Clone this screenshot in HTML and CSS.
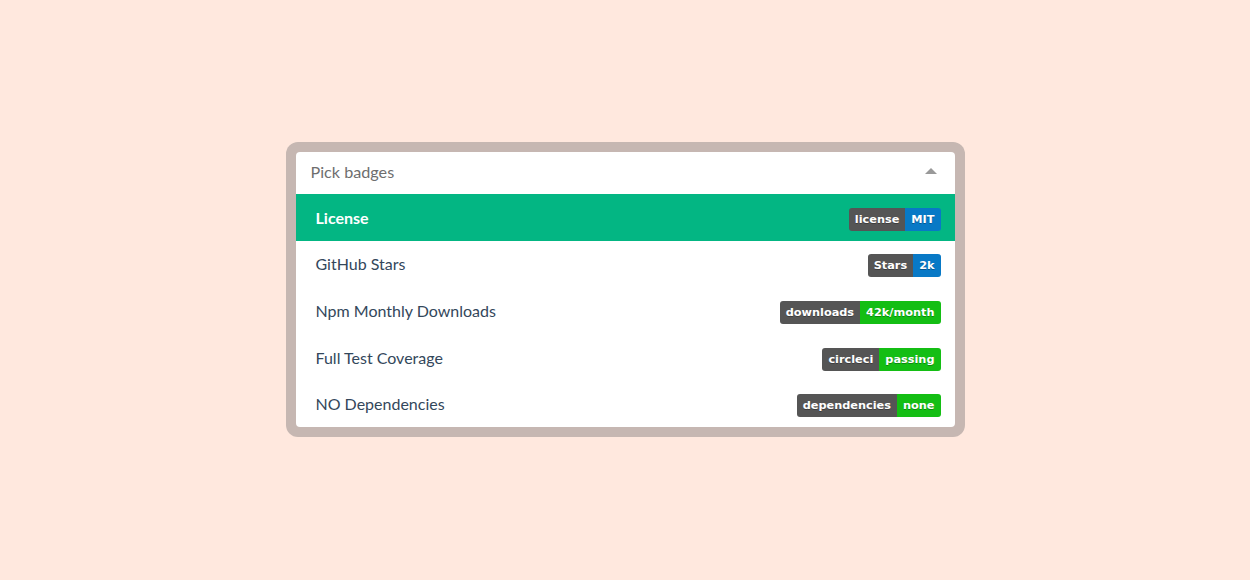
FILE: index.html
```html
<!DOCTYPE html>
<html lang="en">
<head>
    <meta charset="UTF-8">
    <title>Pick badges</title>
    <link rel="stylesheet" href="styles.css">
</head>
<body>

<div class="frame">
    <div class="select">
        <div class="select-head">
            <span>Pick badges</span>
            <span class="caret"></span>
        </div>

        <ul class="options">
            <li class="option active">
                <span>License</span>
                <span class="badge"><b>license</b><i class="blue">MIT</i></span>
            </li>
            <li class="option">
                <span>GitHub Stars</span>
                <span class="badge"><b>Stars</b><i class="blue">2k</i></span>
            </li>
            <li class="option">
                <span>Npm Monthly Downloads</span>
                <span class="badge"><b>downloads</b><i>42k/month</i></span>
            </li>
            <li class="option">
                <span>Full Test Coverage</span>
                <span class="badge"><b>circleci</b><i>passing</i></span>
            </li>
            <li class="option">
                <span>NO Dependencies</span>
                <span class="badge"><b>dependencies</b><i>none</i></span>
            </li>
        </ul>
    </div>
</div>

</body>
</html>
```

FILE: styles.css
```css
body {
    margin: 0;
    height: 580px;
    background-color: #ffe8de;
    font-family: Lato, "Open Sans", sans-serif;
    display: flex;
    justify-content: center;
    align-items: flex-start;
}

.frame {
    margin-top: 142px;
    width: 659px;
    padding: 10px;
    background-color: #c6b7b2;
    border-radius: 12px;
}

.select {
    background-color: #fff;
    border-radius: 4px;
    overflow: hidden;
}

.select-head {
    height: 42px;
    padding: 0 18px 4px 15px;
    box-sizing: border-box;
    display: flex;
    align-items: center;
    justify-content: space-between;
    color: #6e6e6e;
    font-size: 16.2px;
}

.caret {
    width: 0;
    height: 0;
    border-left: 6px solid transparent;
    border-right: 6px solid transparent;
    border-bottom: 6px solid #999;
}

.options {
    list-style: none;
    margin: 0;
    padding: 0;
}

.option {
    height: 46.6px;
    padding: 0 14px 0 20px;
    display: flex;
    align-items: center;
    justify-content: space-between;
    color: #33475b;
    font-size: 16px;
}

.option.active {
    background-color: #03b683;
    color: #fff;
    font-weight: 700;
}

.badge {
    display: flex;
    height: 23px;
    margin-top: 4px;
    border-radius: 3px;
    overflow: hidden;
    font-family: "DejaVu Sans", Verdana, sans-serif;
    font-size: 11.3px;
    font-weight: 700;
    line-height: 23px;
    color: #fff;
    text-shadow: 0 1px 0 rgba(0, 0, 0, 0.3);
}

.badge b,
.badge i {
    font-style: normal;
    padding: 0 6px;
}

.badge b {
    background-color: #555;
}

.badge i {
    background-color: #14be14;
}

.badge i.blue {
    background-color: #0879c6;
}
```
